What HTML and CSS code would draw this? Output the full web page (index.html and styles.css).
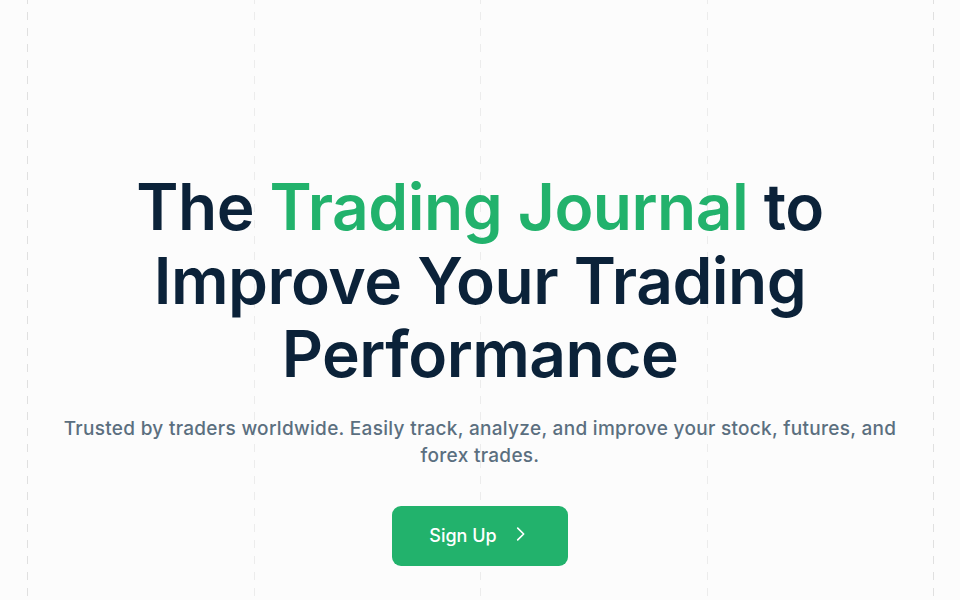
FILE: index.html
```html
<!DOCTYPE html>
<html lang="en">
<head>
<meta charset="utf-8">
<title>Trading Journal</title>
<link rel="stylesheet" href="styles.css">
</head>
<body>
<div class="grid-lines" aria-hidden="true">
  <span class="line line-outer"></span>
  <span class="line"></span>
  <span class="line"></span>
  <span class="line"></span>
  <span class="line line-outer"></span>
</div>
<main class="hero">
  <h1 class="title">The <span class="accent">Trading Journal</span> to Improve Your Trading Performance</h1>
  <p class="subtitle">Trusted by traders worldwide. Easily track, analyze, and improve your stock, futures, and forex trades.</p>
  <a class="cta" href="#">Sign Up
    <svg class="cta-icon" viewBox="0 0 24 24" width="22" height="22" fill="none" stroke="currentColor" stroke-width="1.8" stroke-linecap="round" stroke-linejoin="round"><path d="M9.5 5.5l6.5 6.5-6.5 6.5"/></svg>
  </a>
</main>
</body>
</html>
```
FILE: styles.css
```css
* { box-sizing: border-box; }
html, body { margin: 0; height: 100%; }
body {
  background: #fcfcfc;
  font-family: "Inter", "Noto Sans", sans-serif;
  overflow: hidden;
  position: relative;
}
.grid-lines {
  position: absolute;
  inset: 0 26px 0 27px;
  display: flex;
  justify-content: space-between;
  pointer-events: none;
  z-index: 0;
}
.line {
  width: 1px;
  height: 100%;
  background: repeating-linear-gradient(to bottom, #ececec 0 4px, transparent 4px 12px, #ececec 12px 16px);
}
.line-outer {
  background: repeating-linear-gradient(to bottom, #e0e0e0 0 4px, transparent 4px 12px, #e0e0e0 12px 16px);
}
.hero {
  position: relative;
  z-index: 1;
  display: flex;
  flex-direction: column;
  align-items: center;
  padding: 170px 40px 0;
  text-align: center;
}
.title {
  margin: 0;
  font-size: 64px;
  line-height: 73.5px;
  font-weight: 600;
  letter-spacing: -0.5px;
  color: #0b2239;
  max-width: 720px;
}
.accent { color: #22b26c; }
.subtitle {
  margin: 24px 0 0;
  font-size: 19px;
  line-height: 27px;
  font-weight: 500;
  letter-spacing: 0.3px;
  color: #5b6f7f;
  max-width: 870px;
}
.cta {
  margin-top: 37px;
  width: 176px;
  height: 60px;
  border-radius: 9px;
  background: #22b26c;
  color: #ffffff;
  text-decoration: none;
  font-size: 18px;
  font-weight: 500;
  display: flex;
  align-items: center;
  justify-content: center;
  gap: 12px;
}
.cta-icon { display: block; margin-top: -3px; }
```
